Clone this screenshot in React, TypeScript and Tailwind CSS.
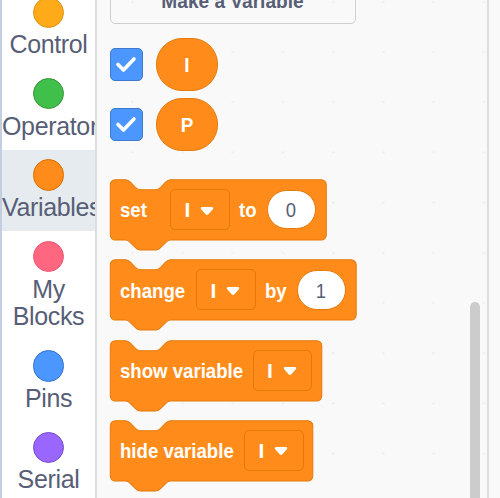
import React from "react";

const categories = [
  { label: "Control", fill: "bg-[#ffab19]", ring: "border-[#dc9317]" },
  { label: "Operators", fill: "bg-[#40bf4a]", ring: "border-[#389438]" },
  { label: "Variables", fill: "bg-[#ff8c1a]", ring: "border-[#db6e00]", active: true },
  { label: "My Blocks", fill: "bg-[#ff6680]", ring: "border-[#f05672]" },
  { label: "Pins", fill: "bg-[#4c97ff]", ring: "border-[#3373cc]" },
  { label: "Serial", fill: "bg-[#9966ff]", ring: "border-[#774dcb]" },
];

function Sidebar() {
  return (
    <nav className="mt-[-13px] h-[511px] w-[95px] shrink-0 overflow-hidden border-l-2 border-[#c3cee2] bg-white">
      {categories.map((c) => (
        <div
          key={c.label}
          className={`flex flex-col items-center gap-[3.3px] pt-[9.5px] pb-[9.6px] ${c.active ? "bg-[#e6ebf0]" : ""}`}
        >
          <div className={`h-[31.5px] w-[31.5px] rounded-full border-[1.5px] ${c.fill} ${c.ring}`} />
          <div className="w-full text-center text-[25px] leading-[27.6px] tracking-[-0.35px] text-[#575e75]">{c.label}</div>
        </div>
      ))}
    </nav>
  );
}

function Monitor({ name }: { name: string }) {
  return (
    <div className="flex h-[52.5px] items-center gap-[13px]">
      <div className="flex h-[33px] w-[33px] items-center justify-center rounded-[5px] border border-[#3d79cc] bg-[#4c97ff]">
        <svg className="mt-[2px]" width="22" height="18" viewBox="0 0 22 18" fill="none" stroke="white" strokeWidth="3.6" strokeLinecap="round" strokeLinejoin="round">
          <path d="M3 8.5 L8.5 14 L19 3" />
        </svg>
      </div>
      <div className="flex h-[52.5px] w-[62px] items-center justify-center rounded-[26px] border border-[#e5790a] bg-[#ff8c1a] text-[21px] font-bold text-white">
        <span className="mt-px scale-x-[0.9] pl-px">{name}</span>
      </div>
    </div>
  );
}

function Label({ text, width }: { text: string; width: string }) {
  return (
    <div className={`${width} shrink-0 pt-px whitespace-nowrap`}>
      <span className="inline-block origin-left scale-x-[0.886]">{text}</span>
    </div>
  );
}

function Dropdown() {
  return (
    <div className="flex h-[41px] w-[59.5px] shrink-0 items-center rounded-[5px] border-[1.3px] border-[#e5790a] pl-[13.5px]">
      <span className="w-[15.5px] pt-px">I</span>
      <svg className="mt-[2px]" width="14" height="10" viewBox="0 0 14 10" fill="white">
        <path d="M2 1 H12 Q14 1.5 12.8 3.2 L8.4 8.3 Q7 9.6 5.6 8.3 L1.2 3.2 Q0 1.5 2 1 Z" />
      </svg>
    </div>
  );
}

function NumberInput({ value }: { value: string }) {
  return (
    <div className="flex h-[39.5px] w-[49px] shrink-0 items-center justify-center rounded-[20px] border border-[#e5790a] bg-white pt-px text-[21px] font-normal text-[#575e75]">
      <span className="scale-x-[0.88]">{value}</span>
    </div>
  );
}

function Block({ width, children }: { width: number; children: React.ReactNode }) {
  const right = width / 1.26 - 4;
  const outline = `M0 4 A4 4 0 0 1 4 0 H12 c2 0 3 1 4 2 l4 4 c1 1 2 2 4 2 h12 c2 0 3 -1 4 -2 l4 -4 c1 -1 2 -2 4 -2 H${right} a4 4 0 0 1 4 4 v40 a4 4 0 0 1 -4 4 H48 c-2 0 -3 1 -4 2 l-4 4 c-1 1 -2 2 -4 2 h-12 c-2 0 -3 -1 -4 -2 l-4 -4 c-1 -1 -2 -2 -4 -2 H4 a4 4 0 0 1 -4 -4 z`;
  return (
    <div className="relative flex h-[61px] items-center pl-[10.5px] text-[21px] font-bold text-white">
      <svg className="absolute top-0 left-0 -z-10 overflow-visible" width={width} height="72">
        <path transform="translate(0.3 0.7) scale(1.257)" d={outline} fill="#ff8c1a" stroke="#e5790a" strokeWidth="0.8" />
      </svg>
      {children}
    </div>
  );
}

function GridDots() {
  return (
    <svg className="absolute inset-0 -z-20" width="390" height="498">
      <defs>
        <pattern id="dots" x="10.5" y="27" width="50.2" height="50.2" patternUnits="userSpaceOnUse">
          <circle cx="25" cy="25" r="1.2" fill="#ededed" />
        </pattern>
      </defs>
      <rect width="390" height="498" fill="url(#dots)" />
    </svg>
  );
}

export default function App() {
  return (
    <div className="flex h-[498px] w-[500px] overflow-hidden bg-[#f9f9f9] font-['Liberation_Sans',Arial,sans-serif]">
      <Sidebar />
      <main className="relative isolate h-[498px] w-[392px] shrink-0 border-l-2 border-[#dddddd] pl-[12.5px]">
        <GridDots />
        <div className="mt-[-26px] flex h-[50px] w-[246px] items-center justify-center rounded-[5px] border-[1.5px] border-[#cfcfcf] text-[20px] font-bold text-[#575e75]">
          <span className="mt-[4px] scale-x-[0.955] whitespace-nowrap">Make a Variable</span>
        </div>
        <div className="mt-[14px] flex flex-col gap-[7.5px]">
          <Monitor name="I" />
          <Monitor name="P" />
        </div>
        <div className="mt-[28.5px] flex flex-col gap-[19.3px]">
          <Block width={216.5}>
            <Label text="set" width="w-[50px]" />
            <Dropdown />
            <Label text="to" width="ml-[9px] w-[28px]" />
            <NumberInput value="0" />
          </Block>
          <Block width={246.5}>
            <Label text="change" width="w-[76px]" />
            <Dropdown />
            <Label text="by" width="ml-[9px] w-[32px]" />
            <NumberInput value="1" />
          </Block>
          <Block width={212}>
            <Label text="show variable" width="w-[132.5px]" />
            <Dropdown />
          </Block>
          <Block width={203}>
            <Label text="hide variable" width="w-[124px]" />
            <Dropdown />
          </Block>
        </div>
      </main>
      <aside className="relative w-[13px] shrink-0 border-l-[2.5px] border-[#dddddd]">
        <div className="absolute top-[302px] left-[-19px] h-[210px] w-[10px] rounded-full bg-[#cccccc]" />
      </aside>
    </div>
  );
}
